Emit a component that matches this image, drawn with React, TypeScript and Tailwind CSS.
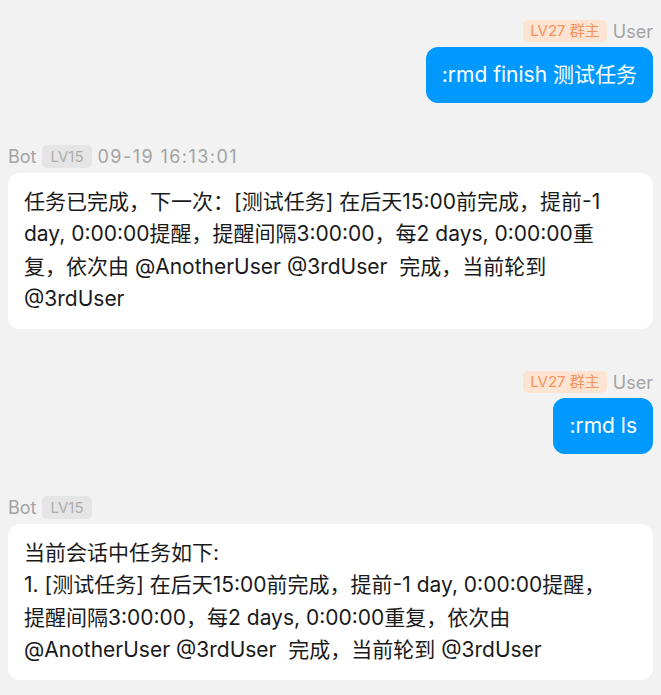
const font = { fontFamily: '"Inter", "Noto Sans CJK SC", sans-serif' };

function UserMessage({ text }: { text: string }) {
  return (
    <div className="flex flex-col items-end">
      <div className="flex items-center gap-[6px] h-[22px]">
        <span className="rounded-[5px] bg-[#fde4d2] px-[7px] h-[22px] leading-[22px] text-[15px] text-[#f5925a]">
          LV27 群主
        </span>
        <span className="text-[18px] text-[#a3a3a3]">User</span>
      </div>
      <div className="mt-[5px] rounded-[12px] bg-[#0099ff] px-[16px] py-[12px] text-[21px] leading-[32px] text-white">
        {text}
      </div>
    </div>
  );
}

function BotMessage({ time, children }: { time?: string; children: React.ReactNode }) {
  return (
    <div className="flex flex-col items-start">
      <div className="flex items-center gap-[6px] h-[23px]">
        <span className="text-[18px] text-[#a3a3a3]">Bot</span>
        <span className="rounded-[5px] bg-[#e5e5e5] px-[8px] h-[23px] leading-[23px] text-[15px] text-[#adadad]">
          LV15
        </span>
        {time && <span className="text-[18px] tracking-[0.08em] text-[#a3a3a3]">{time}</span>}
      </div>
      <div className="mt-[5px] w-full rounded-[12px] bg-white pl-[16px] pr-[32px] pt-[13px] pb-[14px] text-[21px] leading-[32.3px] text-[#1a1a1a]">
        {children}
      </div>
    </div>
  );
}

export default function App() {
  return (
    <div className="min-h-[695px] bg-[#f2f2f2] px-[8px] pt-[20px] pb-[14px]" style={font}>
      <div className="flex flex-col gap-[42px]">
        <UserMessage text=":rmd finish 测试任务" />
        <BotMessage time="09-19 16:13:01">
          任务已完成，下一次：[测试任务] 在后天15:00前完成，提前-1 day, 0:00:00提醒，提醒间隔3:00:00，每2 days, 0:00:00重复，依次由 @AnotherUser @3rdUser&nbsp; 完成，当前轮到 @3rdUser
        </BotMessage>
        <UserMessage text=":rmd ls" />
        <BotMessage>
          <div>当前会话中任务如下:</div>
          <div>
            1. [测试任务] 在后天15:00前完成，提前-1 day, 0:00:00提醒，提醒间隔3:00:00，每2 days, 0:00:00重复，依次由 @AnotherUser @3rdUser&nbsp; 完成，当前轮到 @3rdUser
          </div>
        </BotMessage>
      </div>
    </div>
  );
}
